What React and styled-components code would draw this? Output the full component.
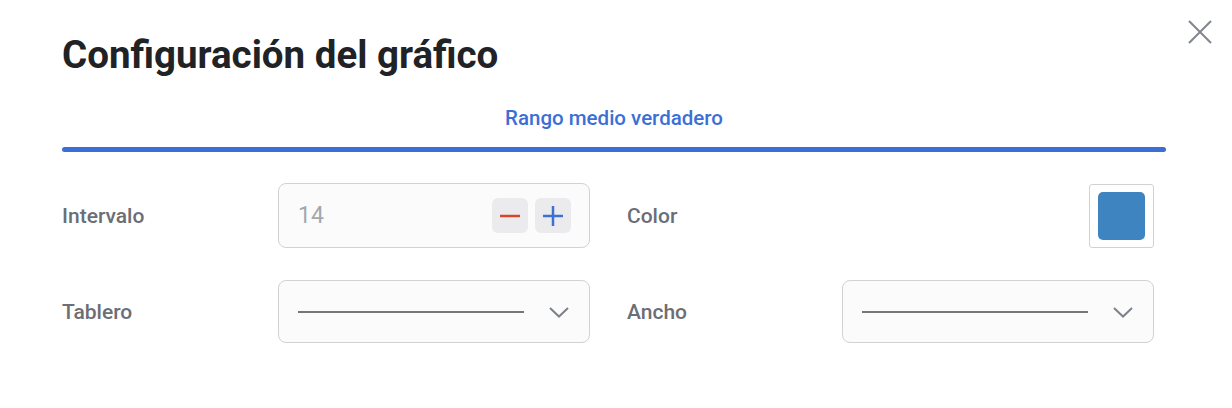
import React, { useState } from 'react';
import styled, { createGlobalStyle } from 'styled-components';

const Global = createGlobalStyle`
  html, body { margin: 0; padding: 0; background: #fff; }
  body { font-family: Roboto, "Noto Sans", "Liberation Sans", sans-serif; }
`;

const Dialog = styled.div`
  position: relative;
  width: 1232px;
  height: 408px;
  box-sizing: border-box;
  padding: 32px 66px 0 62px;
  background: #fff;
`;

const Title = styled.h1`
  margin: 0;
  font-size: 38.5px;
  font-weight: 700;
  color: #202226;
  line-height: 46px;
`;

const Close = styled.button`
  position: absolute;
  top: 18px;
  right: 18px;
  width: 28px;
  height: 28px;
  padding: 0;
  border: 0;
  background: none;
  cursor: pointer;
`;

const Tabs = styled.div`
  margin-top: 28px;
  display: flex;
  flex-direction: column;
`;

const Tab = styled.div`
  text-align: center;
  font-size: 20.5px;
  font-weight: 500;
  color: #3b6fd7;
  line-height: 24px;
`;

const TabBar = styled.div`
  margin-top: 17px;
  height: 5px;
  border-radius: 3px;
  background: #3b6fd7;
`;

const Grid = styled.div`
  margin-top: 31px;
  display: grid;
  grid-template-columns: 216px 312px 37px 215px 312px;
  row-gap: 32px;
  align-items: center;
`;

const Label = styled.div`
  font-size: 21px;
  font-weight: 500;
  color: #6b6e75;
  grid-column: ${p => p.$col};
`;

const Field = styled.div`
  grid-column: ${p => p.$col};
  height: ${p => p.$h || 64}px;
  box-sizing: border-box;
  border: 1px solid #d2d2d4;
  border-radius: 8px;
  background: #fbfbfb;
  display: flex;
  align-items: center;
  padding: 0 18px 0 19px;
`;

const Value = styled.span`
  flex: 1;
  font-size: 23px;
  color: #a4a7ad;
`;

const StepBtn = styled.button`
  width: 36px;
  height: 35px;
  margin-left: 7px;
  border: 0;
  border-radius: 6px;
  background: #ebebed;
  display: flex;
  align-items: center;
  justify-content: center;
  padding: 0;
  cursor: pointer;
`;

const Line = styled.div`
  width: 226px;
  height: 2px;
  background: #767676;
`;

const Chevron = styled.svg`
  margin-left: auto;
  margin-right: 1px;
`;

const SwatchBox = styled.div`
  grid-column: 5;
  justify-self: end;
  width: 65px;
  height: 64px;
  box-sizing: border-box;
  border: 1px solid #d2d2d4;
  border-radius: 3px;
  display: flex;
  align-items: center;
  justify-content: center;
`;

const Swatch = styled.div`
  width: 47px;
  height: 48px;
  border-radius: 5px;
  background: ${p => p.$color};
`;

const LineSelect = ({ col }) => (
  <Field $col={col} $h={63}>
    <Line />
    <Chevron width="22" height="14" viewBox="0 0 22 14">
      <path d="M2 3 L11 11.5 L20 3" fill="none" stroke="#7d818a" strokeWidth="2" />
    </Chevron>
  </Field>
);

export default function App() {
  const [interval, setInterval] = useState(14);
  return (
    <>
      <Global />
      <Dialog>
        <Title>Configuración del gráfico</Title>
        <Close aria-label="Cerrar">
          <svg width="28" height="28" viewBox="0 0 28 28">
            <path d="M3 3 L25 25 M25 3 L3 25" stroke="#80858f" strokeWidth="2" />
          </svg>
        </Close>
        <Tabs>
          <Tab>Rango medio verdadero</Tab>
          <TabBar />
        </Tabs>
        <Grid>
          <Label $col={1}>Intervalo</Label>
          <Field $col={2} $h={65}>
            <Value>{interval}</Value>
            <StepBtn onClick={() => setInterval(v => v - 1)}>
              <svg width="22" height="22" viewBox="0 0 22 22">
                <path d="M1 11 H21" stroke="#d5462a" strokeWidth="2.5" />
              </svg>
            </StepBtn>
            <StepBtn onClick={() => setInterval(v => v + 1)}>
              <svg width="22" height="22" viewBox="0 0 22 22">
                <path d="M1 11 H21 M11 1 V21" stroke="#3b72d0" strokeWidth="2.5" />
              </svg>
            </StepBtn>
          </Field>
          <Label $col={4}>Color</Label>
          <SwatchBox>
            <Swatch $color="#3d84c1" />
          </SwatchBox>
          <Label $col={1}>Tablero</Label>
          <LineSelect col={2} />
          <Label $col={4}>Ancho</Label>
          <LineSelect col={5} />
        </Grid>
      </Dialog>
    </>
  );
}
